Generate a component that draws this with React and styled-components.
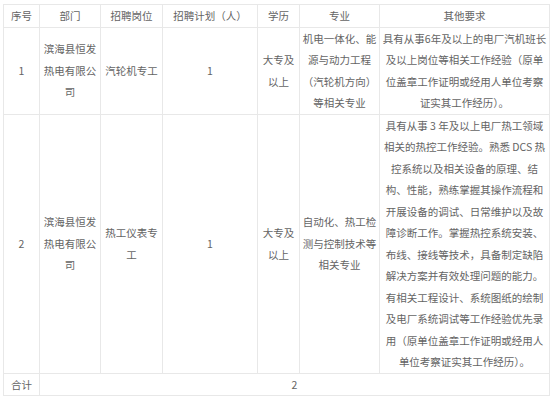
import React from "react";
import styled, { createGlobalStyle } from "styled-components";

const Global = createGlobalStyle`
  html, body { margin: 0; padding: 0; background: #fff; }
  body { font-family: "Noto Sans CJK SC", "Noto Sans", sans-serif; }
`;

const Page = styled.div`
  padding: 4px 0 0 3px;
`;

const Table = styled.table`
  border-collapse: collapse;
  table-layout: fixed;
  width: 546px;
  color: #646464;
  font-size: 10.5px;
  line-height: 21.5px;
`;

const Cell = styled.td`
  border: 1px solid #e8e8e8;
  padding: 0 1px;
  text-align: center;
  vertical-align: middle;
  word-break: break-all;
  height: ${(p) => p.$h || "auto"};
`;

const HeadCell = styled(Cell).attrs({ as: "th" })`
  font-weight: normal;
`;

const cols = [36, 61, 62, 95, 42, 80, 170];

const rows = [
  {
    no: "1",
    dept: "滨海县恒发热电有限公司",
    post: "汽轮机专工",
    plan: "1",
    edu: "大专及以上",
    major: "机电一体化、能源与动力工程（汽轮机方向）等相关专业",
    other:
      "具有从事6年及以上的电厂汽机班长及以上岗位等相关工作经验（原单位盖章工作证明或经用人单位考察证实其工作经历）。",
    h: "84px",
  },
  {
    no: "2",
    dept: "滨海县恒发热电有限公司",
    post: "热工仪表专工",
    plan: "1",
    edu: "大专及以上",
    major: "自动化、热工检测与控制技术等相关专业",
    other:
      "具有从事 3 年及以上电厂热工领域相关的热控工作经验。熟悉 DCS 热控系统以及相关设备的原理、结构、性能，熟练掌握其操作流程和开展设备的调试、日常维护以及故障诊断工作。掌握热控系统安装、布线、接线等技术，具备制定缺陷解决方案并有效处理问题的能力。有相关工程设计、系统图纸的绘制及电厂系统调试等工作经验优先录用（原单位盖章工作证明或经用人单位考察证实其工作经历）。",
    h: "256px",
  },
];

export default function App() {
  return (
    <>
      <Global />
      <Page>
        <Table>
          <colgroup>
            {cols.map((w, i) => (
              <col key={i} style={{ width: w }} />
            ))}
          </colgroup>
          <thead>
            <tr>
              <HeadCell $h="21px">序号</HeadCell>
              <HeadCell>部门</HeadCell>
              <HeadCell>招聘岗位</HeadCell>
              <HeadCell>招聘计划（人）</HeadCell>
              <HeadCell>学历</HeadCell>
              <HeadCell>专业</HeadCell>
              <HeadCell>其他要求</HeadCell>
            </tr>
          </thead>
          <tbody>
            {rows.map((r) => (
              <tr key={r.no}>
                <Cell $h={r.h}>{r.no}</Cell>
                <Cell>{r.dept}</Cell>
                <Cell>{r.post}</Cell>
                <Cell>{r.plan}</Cell>
                <Cell>{r.edu}</Cell>
                <Cell>{r.major}</Cell>
                <Cell>{r.other}</Cell>
              </tr>
            ))}
            <tr>
              <Cell $h="20px">合计</Cell>
              <Cell colSpan={6}>2</Cell>
            </tr>
          </tbody>
        </Table>
      </Page>
    </>
  );
}
